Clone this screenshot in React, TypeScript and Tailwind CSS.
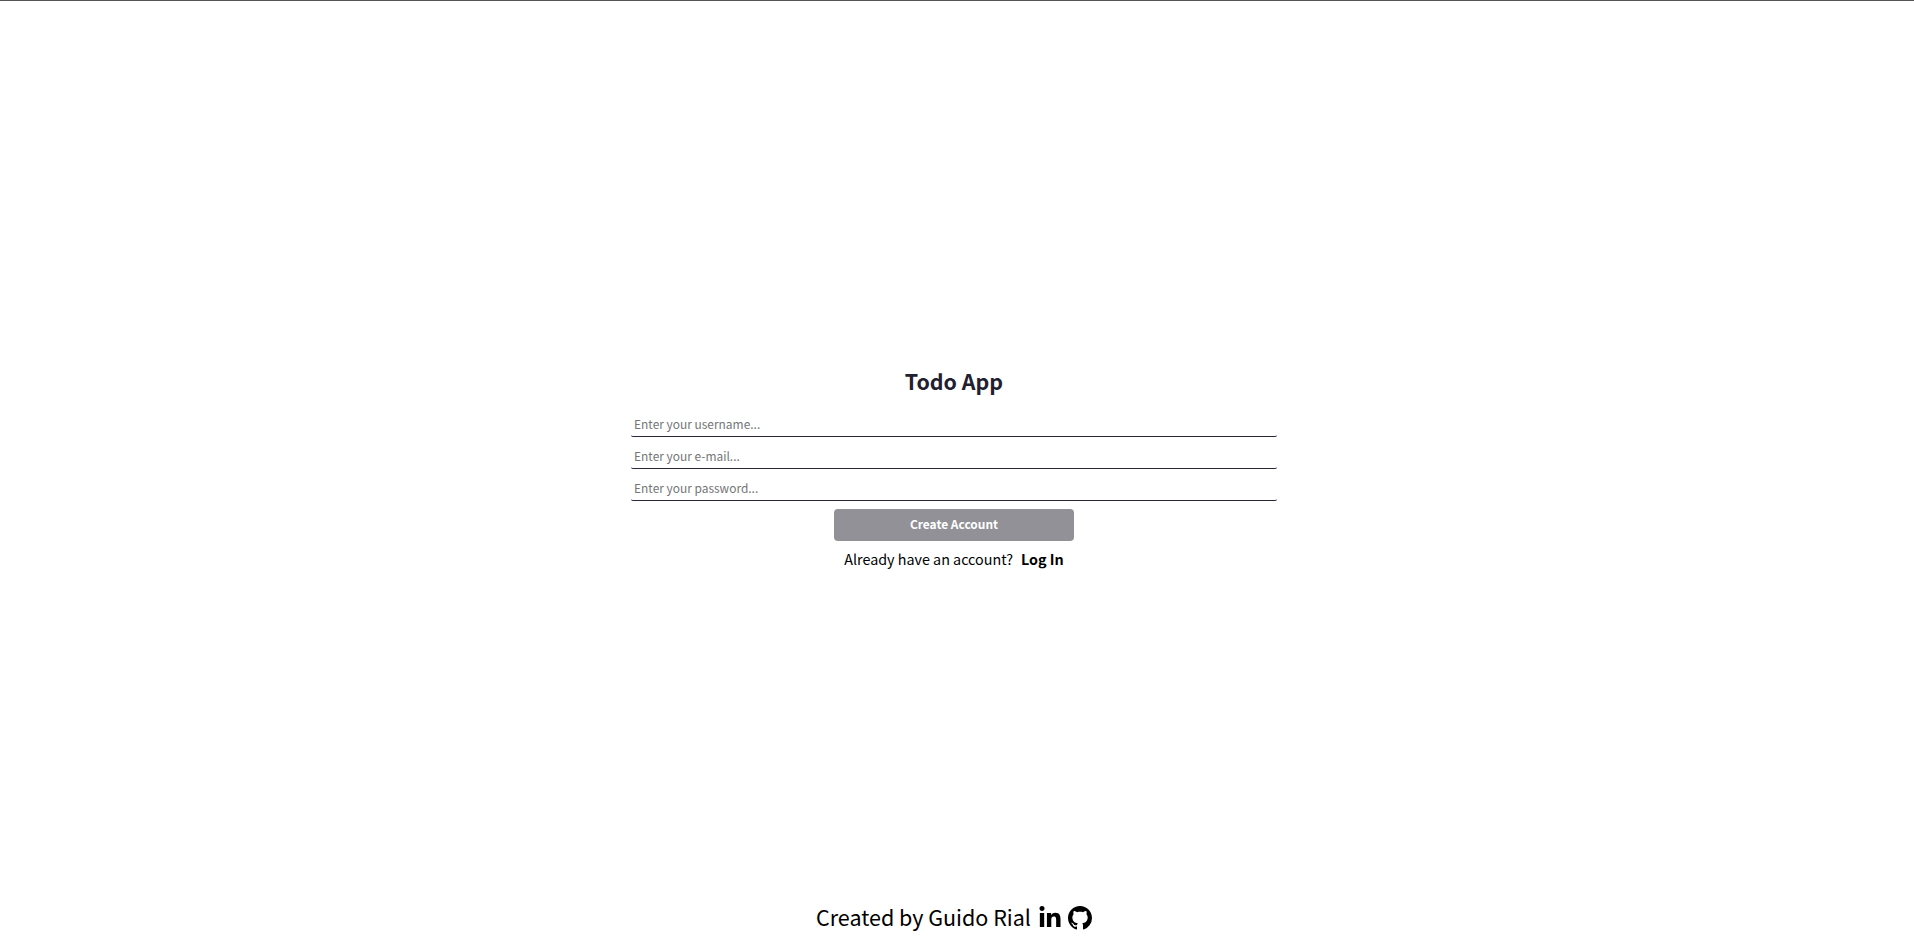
import { BsGithub } from "react-icons/bs";
import { FaLinkedinIn } from "react-icons/fa";

const fields = [
  { type: "text", placeholder: "Enter your username..." },
  { type: "email", placeholder: "Enter your e-mail..." },
  { type: "password", placeholder: "Enter your password..." },
];

export default function App() {
  return (
    <div className="flex h-[949px] flex-col items-center border-t border-[#555] bg-white pr-[6px] font-['Noto_Sans_CJK_SC',sans-serif] text-black">
      <main className="flex w-[646px] flex-1 flex-col items-center pt-[362px]">
        <h1 className="text-[21.4px] leading-[35px] font-bold text-[#22202f]">Todo App</h1>
        <form className="mt-[15px] flex w-full flex-col items-center">
          {fields.map((f) => (
            <input
              key={f.type}
              type={f.type}
              placeholder={f.placeholder}
              className="mb-2 h-6 w-full rounded-[2px] border-b border-[#2b273b] px-[3px] pb-0.5 text-[11.95px] outline-none placeholder:text-[#757575]"
            />
          ))}
          <button type="button" className="h-8 w-60 rounded-[4px] bg-[#929197] pb-0.5 text-[11.95px] font-bold text-white">
            Create Account
          </button>
        </form>
        <p className="mt-[6px] flex gap-2 text-[14.33px] leading-6">
          <span>Already have an account?</span>
          <b>Log In</b>
        </p>
      </main>
      <footer className="flex h-[62px] items-center text-2xl">
        <span className="pb-0.5 text-[21.5px]">Created by Guido Rial</span>
        <FaLinkedinIn className="ml-[7px]" />
        <BsGithub className="ml-1.5" />
      </footer>
    </div>
  );
}
